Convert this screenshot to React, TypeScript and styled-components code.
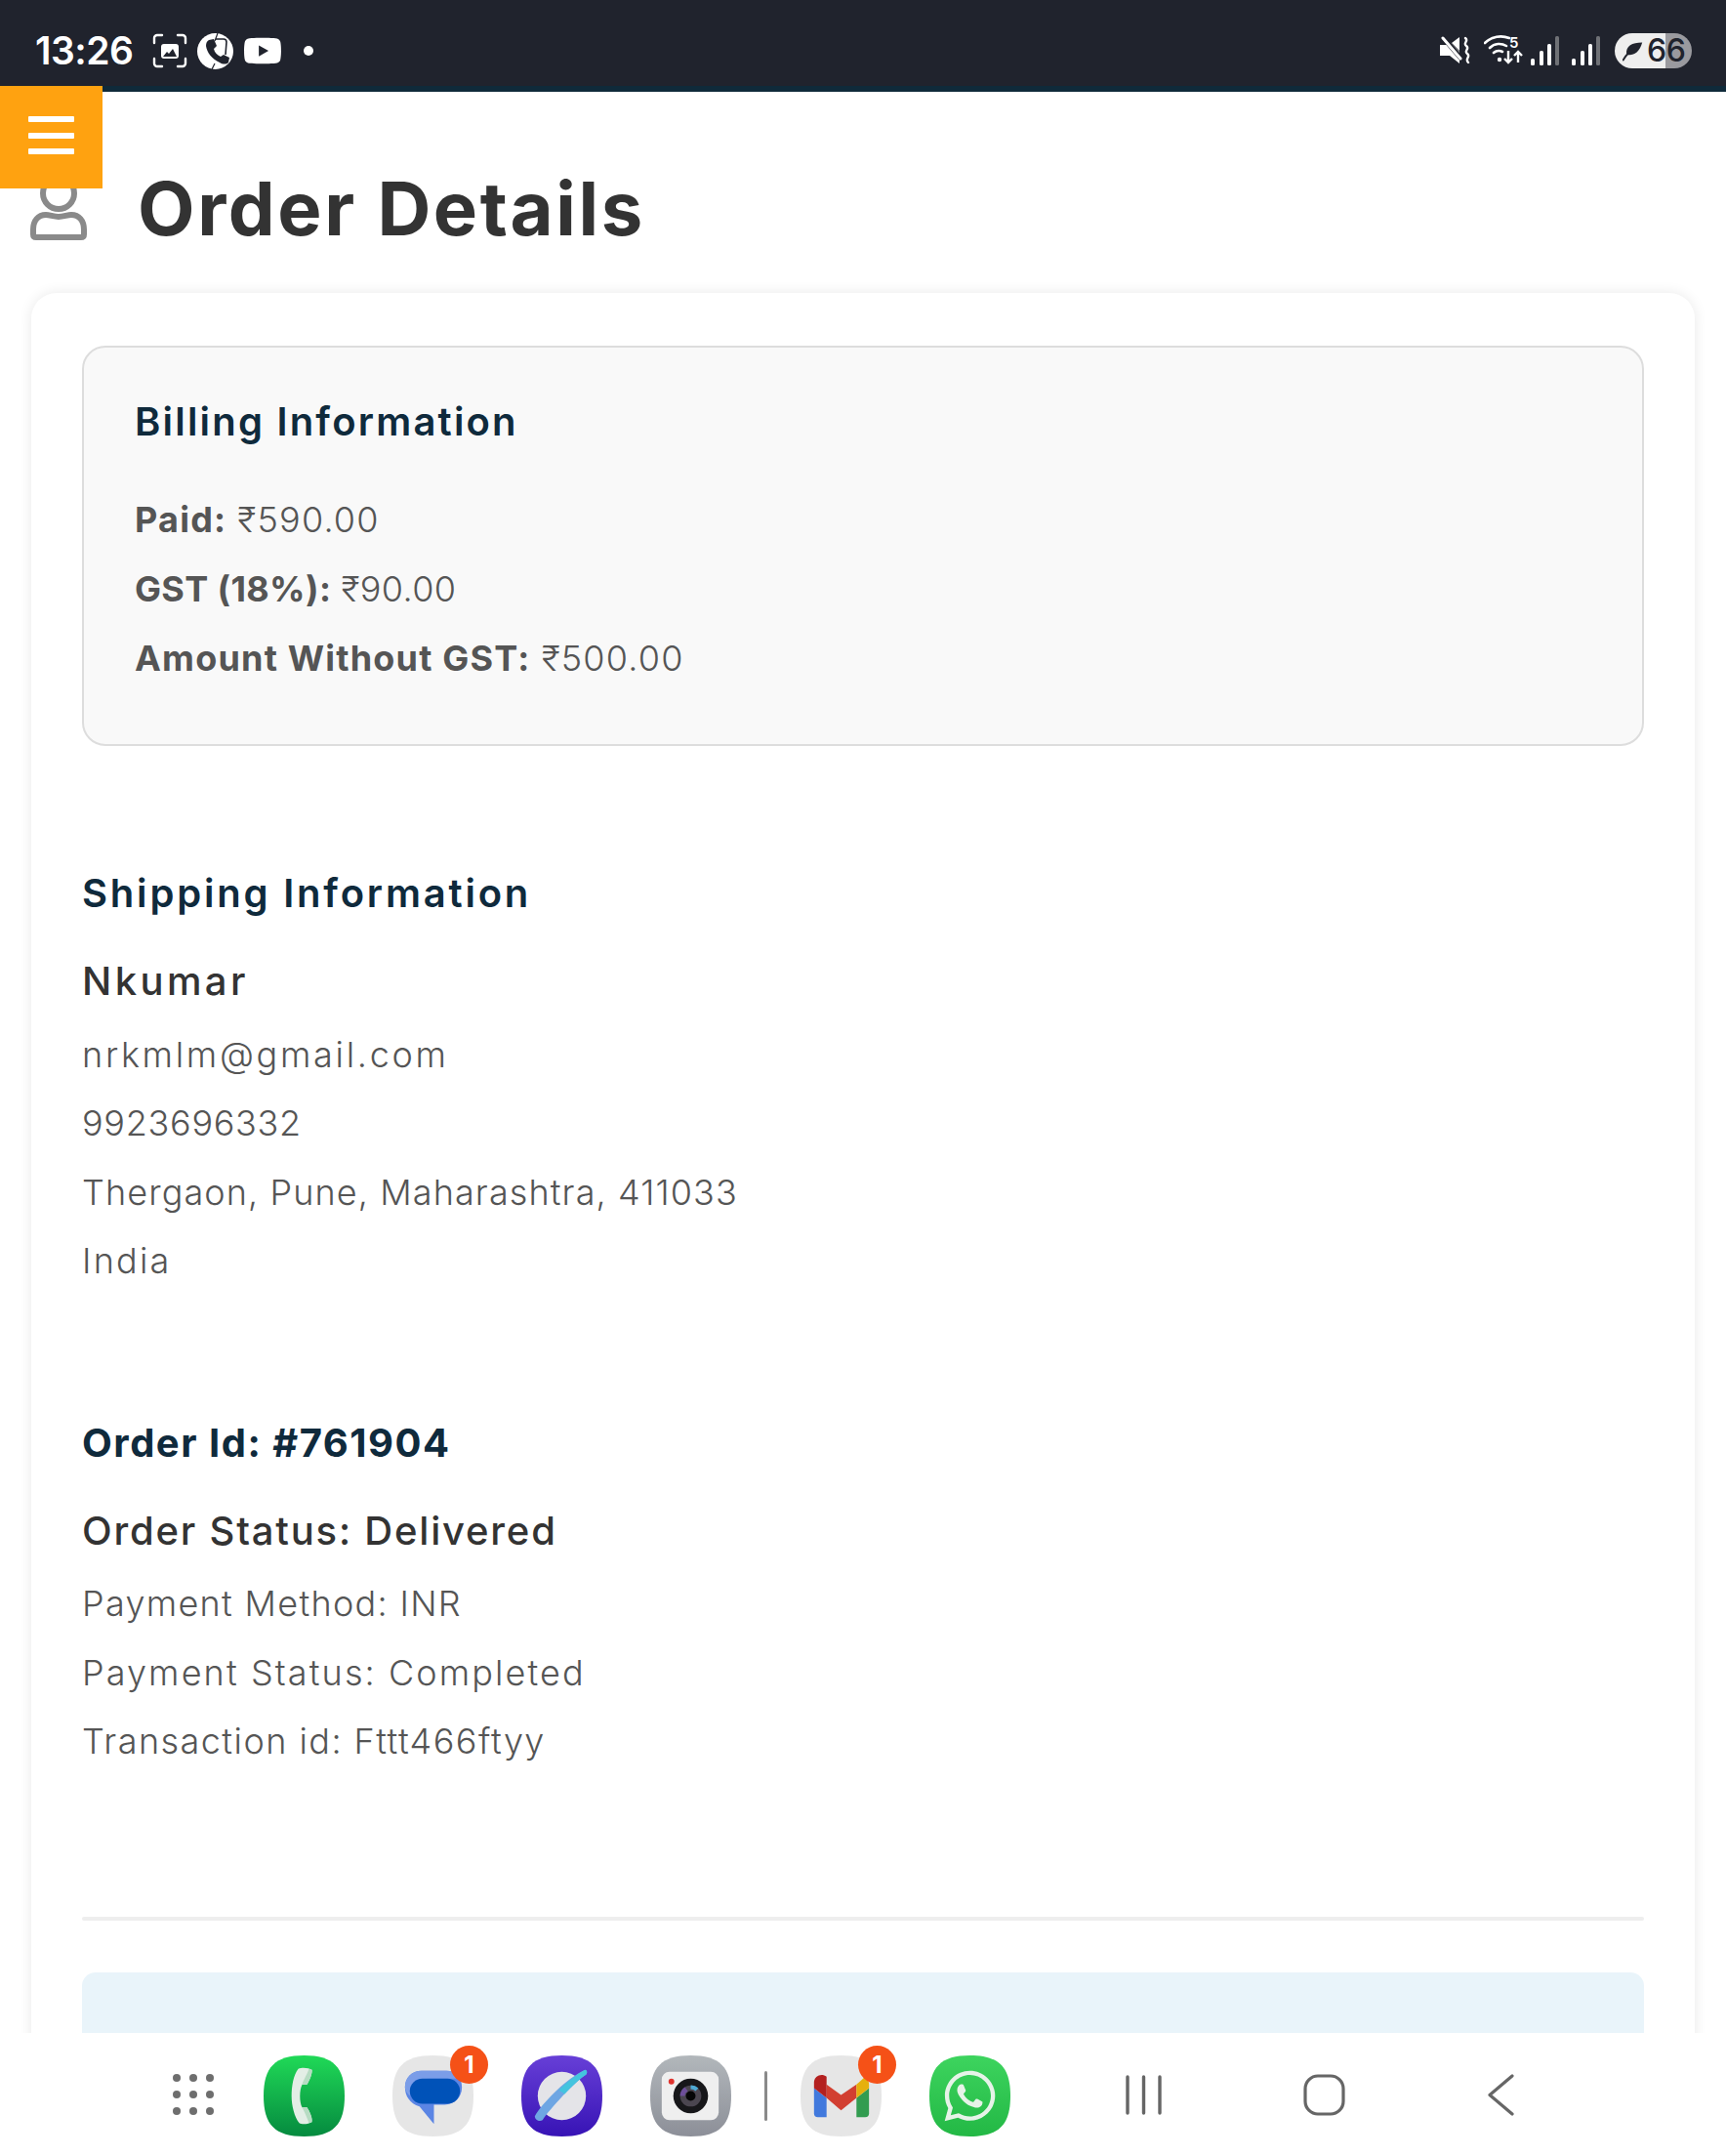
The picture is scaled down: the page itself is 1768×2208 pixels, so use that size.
import React from 'react';
import styled, { createGlobalStyle } from 'styled-components';
import { FaWhatsapp, FaYoutube } from 'react-icons/fa';

const GlobalStyle = createGlobalStyle`
  html, body {
    margin: 0;
    padding: 0;
    background: #fff;
    font-family: Inter, "Noto Sans", sans-serif;
  }
  * { box-sizing: border-box; }
`;

const SQUIRCLE = 'M42 0C72 0 84 12 84 42C84 72 72 84 42 84C12 84 0 72 0 42C0 12 12 0 42 0Z';

function ScreenshotIcon() {
  return (
    <svg width="36" height="36" viewBox="0 0 36 36" fill="none">
      <path d="M2 10V5a3 3 0 0 1 3-3h5M26 2h5a3 3 0 0 1 3 3v5M34 26v5a3 3 0 0 1-3 3h-5M10 34H5a3 3 0 0 1-3-3v-5" stroke="#fff" strokeWidth="2.4" strokeLinecap="round" />
      <rect x="9" y="11" width="18" height="15" rx="3" fill="#fff" />
      <path d="M11 24l4-5 2 2 4-5 4 8z" fill="#20232d" />
    </svg>
  );
}

function CallIcon() {
  return (
    <svg width="37" height="37" viewBox="0 0 37 37">
      <circle cx="18.5" cy="18.5" r="18.5" fill="#fff" />
      <path d="M12 7l5-1 3 7-3 3c1 4 3 6 7 8l3-2 6 3-1 5c-2 2-6 2-9 0C15 26 10 20 9 13c0-3 1-5 3-6z" fill="#20232d" />
      <path d="M19 6h8c2 0 3 1 3 3l-1 13" stroke="#20232d" strokeWidth="1.6" fill="none" />
      <path d="M21 0l-3 8M15 37l3-6" stroke="#20232d" strokeWidth="1.2" />
    </svg>
  );
}

function MuteIcon() {
  return (
    <svg width="31" height="30" viewBox="0 0 31 30">
      <path d="M0 10h6l4-3 10 10v12L10 21H0z" fill="#fff" transform="translate(0 -1)" />
      <path d="M3 1l18 21" stroke="#20232d" strokeWidth="5" strokeLinecap="round" />
      <path d="M3 2l18 21" stroke="#fff" strokeWidth="3" strokeLinecap="round" />
      <path d="M12 7l8-6v14z" fill="#fff" />
      <path d="M26 2c4 3-3 5 1 8 4 3-3 5 1 8 4 3-3 5 1 9" stroke="#fff" strokeWidth="2.4" fill="none" strokeLinecap="round" />
    </svg>
  );
}

function WifiIcon() {
  return (
    <svg width="42" height="40" viewBox="0 -4 42 40" fill="none">
      <path d="M1 8C8 1 18 0 26 3M6 13c5-5 12-5 17-2M10 18c3-2.5 6-2.5 9-1" stroke="#fff" strokeWidth="2.6" strokeLinecap="round" />
      <circle cx="16" cy="25" r="2.2" fill="#fff" />
      <WifiBand x="26" y="13">5</WifiBand>
      <path d="M25 16v12M21 24l4 4 4-4M35 28V17M31 21l4-4 4 4" stroke="#fff" strokeWidth="2.4" />
    </svg>
  );
}

function SignalIcon() {
  return (
    <svg width="29" height="31" viewBox="0 0 29 31">
      <rect x="0" y="23" width="4" height="7" rx="1.5" fill="#fff" />
      <rect x="9" y="15" width="4" height="15" rx="1.5" fill="#fff" />
      <rect x="17" y="8" width="4" height="22" rx="1.5" fill="#fff" />
      <rect x="25" y="0" width="4" height="30" rx="1.5" fill="#6f7176" />
    </svg>
  );
}

function LeafIcon() {
  return (
    <svg width="21" height="21" viewBox="0 0 26 24">
      <path d="M25 1C12 1 4 5 5 16c6 2 16 0 20-15z" fill="#20232d" />
      <path d="M1 23C5 16 10 11 17 7" stroke="#20232d" strokeWidth="2.4" fill="none" strokeLinecap="round" />
    </svg>
  );
}

function UserIcon() {
  return (
    <svg width="58" height="66" viewBox="0 0 58 66" fill="none">
      <circle cx="29" cy="18" r="16" stroke="#8a8a8a" strokeWidth="6" />
      <path d="M3 55c0-9 5-15 13-15 4 0 8 2 13 2s9-2 13-2c8 0 13 6 13 15v5c0 2-1 3-3 3H6c-2 0-3-1-3-3z" stroke="#8a8a8a" strokeWidth="6" strokeLinejoin="round" />
    </svg>
  );
}

function PhoneApp() {
  return (
    <AppIcon>
      <svg width="83" height="83" viewBox="0 0 84 84">
        <defs>
          <linearGradient id="ph" x1="0" y1="0" x2="0" y2="1">
            <stop offset="0" stopColor="#20d957" />
            <stop offset="1" stopColor="#058a3f" />
          </linearGradient>
        </defs>
        <path d={SQUIRCLE} fill="url(#ph)" />
        <path d="M36 14C40 12 47 13 50 15C51 17 48 26 45 30C43 31 41 30 40 30C37 36 37 48 40 54C41 54 43 53 45 54C48 58 51 66 50 69C47 71 40 72 37 70C32 64 29 52 29 42C29 32 31 20 36 14Z" fill="#e3eee6" />
        <path d="M47 14C49 14 50 15 50 15C51 17 48 26 45 30C43 31 41 30 40 30C41 26 45 20 47 14ZM40 54C41 54 43 53 45 54C48 58 51 66 50 69L47 70C45 64 42 58 40 54Z" fill="#b7dcc3" />
      </svg>
    </AppIcon>
  );
}

function MessagesApp() {
  return (
    <AppIcon>
      <svg width="83" height="83" viewBox="0 0 84 84">
        <path d={SQUIRCLE} fill="#e6e6e6" />
        <path d="M30 16h26c10 0 16 7 16 17 0 11-8 18-18 18h-11v20L28 53c-10-3-15-11-15-20 0-10 7-17 17-17z" fill="#5b85e4" />
        <path d="M30 16h26c9 0 15 6 16 10-2-1-4-2-7-2H38c-11 0-19 7-20 18-3-3-5-6-5-9 0-10 7-17 17-17z" fill="#7b9de8" />
        <rect x="18" y="24" width="52" height="26" rx="13" fill="#0052b8" />
      </svg>
      <Badge>1</Badge>
    </AppIcon>
  );
}

function BrowserApp() {
  return (
    <AppIcon>
      <svg width="83" height="83" viewBox="0 0 84 84">
        <defs>
          <linearGradient id="br" x1="0" y1="0" x2="0" y2="1">
            <stop offset="0" stopColor="#673fd7" />
            <stop offset="1" stopColor="#3713b5" />
          </linearGradient>
        </defs>
        <path d={SQUIRCLE} fill="url(#br)" />
        <circle cx="42" cy="42" r="25" fill="#e4e4e8" />
        <path d="M14 63c8-14 34-40 52-48 2 0 3 3 1 5-10 6-38 36-45 47-3 2-8 0-8-4z" fill="#6ea6e3" />
        <path d="M39 36c8-8 18-16 27-21 2 0 3 3 1 5-5 3-14 11-22 20z" fill="#44c4de" />
      </svg>
    </AppIcon>
  );
}

function CameraApp() {
  return (
    <AppIcon>
      <svg width="83" height="83" viewBox="0 0 84 84">
        <defs>
          <linearGradient id="cm" x1="0" y1="0" x2="0" y2="1">
            <stop offset="0" stopColor="#b2b7bb" />
            <stop offset="1" stopColor="#8c8f98" />
          </linearGradient>
        </defs>
        <path d={SQUIRCLE} fill="url(#cm)" />
        <rect x="12" y="17" width="59" height="50" rx="8" fill="#efefef" />
        <circle cx="22" cy="27" r="3" fill="#e0332e" />
        <circle cx="42" cy="42" r="18" fill="#17171a" />
        <circle cx="42" cy="42" r="11" fill="#4b4650" />
        <path d="M42 31a11 11 0 0 1 8 3l-3 3a7 7 0 0 0-5-2z" fill="#4ea9d4" />
        <path d="M31 42a11 11 0 0 1 5-9l3 4a6 6 0 0 0-3 5z" fill="#6d4e9a" />
        <circle cx="42" cy="42" r="5" fill="#050506" />
      </svg>
    </AppIcon>
  );
}

function GmailApp() {
  return (
    <AppIcon>
      <svg width="83" height="83" viewBox="0 0 84 84">
        <path d={SQUIRCLE} fill="#e6e6e6" />
        <path d="M14 34l13 10v20H18a4 4 0 0 1-4-4z" fill="#4179dd" />
        <path d="M58 44l13-10v26a4 4 0 0 1-4 4h-9z" fill="#329c50" />
        <path d="M27 30l15 11 16-11v14L42 57 27 44z" fill="#d23f31" />
        <path d="M14 28c0-7 8-10 13-6v22L14 34z" fill="#b3201f" />
        <path d="M58 30l8-7c2 1 5 3 5 7v4L58 44z" fill="#e6b00d" />
      </svg>
      <Badge>1</Badge>
    </AppIcon>
  );
}

function WhatsappApp() {
  return (
    <AppIcon>
      <svg width="83" height="83" viewBox="0 0 84 84">
        <defs>
          <linearGradient id="wa" x1="0" y1="0" x2="0" y2="1">
            <stop offset="0" stopColor="#3dd45e" />
            <stop offset="1" stopColor="#23b845" />
          </linearGradient>
        </defs>
        <path d={SQUIRCLE} fill="url(#wa)" />
      </svg>
      <WhatsappGlyph>
        <FaWhatsapp size={59} color="#e6f3e8" />
      </WhatsappGlyph>
    </AppIcon>
  );
}

export default function App() {
  return (
    <Screen>
      <GlobalStyle />
      <StatusBar>
        <StatusLeft>
          <Time>13:26</Time>
          <NotificationIcons>
            <ScreenshotIcon />
            <CallIcon />
            <FaYoutube size={40} color="#fff" />
            <MoreDot />
          </NotificationIcons>
        </StatusLeft>
        <StatusRight>
          <MuteIcon />
          <WifiIcon />
          <SignalGroup>
            <SignalIcon />
            <SignalIcon />
          </SignalGroup>
          <Battery>
            <LeafIcon />
            <BatteryLevel>66</BatteryLevel>
          </Battery>
        </StatusRight>
      </StatusBar>
      <MenuButton aria-label="menu">
        <MenuLine />
        <MenuLine />
        <MenuLine />
      </MenuButton>
      <PageHeader>
        <UserIcon />
        <PageTitle>Order Details</PageTitle>
      </PageHeader>
      <Card>
        <BillingBox>
          <BillingTitle>Billing Information</BillingTitle>
          <BillingRow $track={1.2}><strong>Paid:</strong> ₹590.00</BillingRow>
          <BillingRow $track={0.35}><strong>GST (18%):</strong> ₹90.00</BillingRow>
          <BillingRow $track={1.2}><strong>Amount Without GST:</strong> ₹500.00</BillingRow>
        </BillingBox>
        <InfoSection>
          <SectionTitle $weight={600} $track={2.8}>Shipping Information</SectionTitle>
          <SubTitle $track={3.4}>Nkumar</SubTitle>
          <InfoLines>
            <InfoLine $track={2.7}>nrkmlm@gmail.com</InfoLine>
            <InfoLine $track={0.7}>9923696332</InfoLine>
            <InfoLine $track={1.1}>Thergaon, Pune, Maharashtra, 411033</InfoLine>
            <InfoLine $track={2.2}>India</InfoLine>
          </InfoLines>
        </InfoSection>
        <InfoSection>
          <SectionTitle $weight={700} $track={1.5}>Order Id: #761904</SectionTitle>
          <SubTitle $track={1.8}>Order Status: Delivered</SubTitle>
          <InfoLines>
            <InfoLine $track={1.3}>Payment Method: INR</InfoLine>
            <InfoLine $track={2.1}>Payment Status: Completed</InfoLine>
            <InfoLine $track={1.45}>Transaction id: Fttt466ftyy</InfoLine>
          </InfoLines>
        </InfoSection>
        <Divider />
        <NoticeBox />
      </Card>
      <Dock>
        <AppGrid>
          {Array.from({ length: 9 }).map((_, i) => <GridDot key={i} />)}
        </AppGrid>
        <DockApps>
          <PhoneApp />
          <MessagesApp />
          <BrowserApp />
          <CameraApp />
          <DockSeparator />
          <GmailApp />
          <WhatsappApp />
        </DockApps>
        <NavButtons>
          <svg width="37" height="41" viewBox="0 0 37 41">
            <path d="M2 2v37M18.5 2v37M35 2v37" stroke="#666" strokeWidth="3.4" strokeLinecap="round" />
          </svg>
          <svg width="45" height="43" viewBox="0 0 45 43" fill="none">
            <rect x="3" y="2" width="39" height="39" rx="13" stroke="#666" strokeWidth="3.2" />
          </svg>
          <svg width="28" height="43" viewBox="0 0 28 43" fill="none">
            <path d="M26 2L3 21.5 26 41" stroke="#666" strokeWidth="3.2" strokeLinecap="round" strokeLinejoin="round" />
          </svg>
        </NavButtons>
      </Dock>
    </Screen>
  );
}

const Screen = styled.div`
  position: relative;
  width: 1768px;
  height: 2208px;
  overflow: hidden;
  background: #fff;
`;

const StatusBar = styled.div`
  display: flex;
  align-items: center;
  justify-content: space-between;
  height: 94px;
  padding: 16px 35px 0 36px;
  background: #20232d;
  border-bottom: 6px solid #0f2a3a;
`;

const StatusLeft = styled.div`
  display: flex;
  align-items: center;
  gap: 20px;
`;

const Time = styled.span`
  color: #fff;
  font-size: 39px;
  font-weight: 600;
  line-height: 46px;
  letter-spacing: -0.5px;
`;

const NotificationIcons = styled.div`
  display: flex;
  align-items: center;
  gap: 10px;
`;

const MoreDot = styled.span`
  width: 10px;
  height: 10px;
  margin-left: 12px;
  border-radius: 50%;
  background: #fff;
`;

const StatusRight = styled.div`
  display: flex;
  align-items: center;
  gap: 14px;
`;

const WifiBand = styled.text`
  fill: #fff;
  font-family: Inter, sans-serif;
  font-size: 15px;
  font-weight: 600;
`;

const SignalGroup = styled.div`
  display: flex;
  gap: 13px;
  margin-left: -8px;
`;

const Battery = styled.div`
  display: flex;
  align-items: center;
  gap: 4px;
  width: 79px;
  height: 36px;
  margin-left: 1px;
  padding-left: 8px;
  border-radius: 18px;
  background: linear-gradient(90deg, #eeeeee 0 52px, #9a9a9f 52px);
`;

const BatteryLevel = styled.span`
  color: #20232d;
  font-size: 32px;
  font-weight: 500;
  line-height: 36px;
  letter-spacing: -0.5px;
  white-space: nowrap;
`;

const MenuButton = styled.button`
  position: absolute;
  top: 88px;
  left: 0;
  z-index: 2;
  display: flex;
  flex-direction: column;
  align-items: center;
  justify-content: center;
  gap: 10.5px;
  width: 105px;
  height: 105px;
  padding: 0 0 4px;
  border: 0;
  background: #ffa210;
`;

const MenuLine = styled.span`
  width: 47px;
  height: 6px;
  border-radius: 1px;
  background: #fff;
`;

const PageHeader = styled.div`
  display: flex;
  align-items: center;
  gap: 52px;
  height: 206px;
  padding: 86px 0 54px 31px;
`;

const PageTitle = styled.h1`
  margin: 0;
  color: #333;
  font-size: 76px;
  font-weight: 700;
  line-height: 76px;
  letter-spacing: 2.6px;
`;

const Card = styled.div`
  margin: 0 32px;
  height: 1900px;
  padding: 54px 52px;
  border-radius: 26px;
  background: #fff;
  box-shadow: 0 0 14px rgba(0, 0, 0, 0.09);
`;

const BillingBox = styled.div`
  height: 410px;
  padding: 51px 52px;
  border: 2px solid #ddd;
  border-radius: 24px;
  background: #f9f9f9;
`;

const BillingTitle = styled.h3`
  margin: 0 0 40px;
  color: #0f2a3c;
  font-size: 40px;
  font-weight: 600;
  line-height: 50px;
  letter-spacing: 2.2px;
`;

const BillingRow = styled.div<{ $track: number }>`
  color: #555;
  font-size: 36px;
  font-weight: 300;
  line-height: 71px;
  letter-spacing: ${(p) => p.$track}px;

  strong {
    font-weight: 700;
  }
`;

const InfoSection = styled.section`
  margin-top: 126px;
`;

const SectionTitle = styled.h3<{ $weight: number; $track: number }>`
  margin: 0 0 40px;
  color: #0f2a3c;
  font-size: 40px;
  font-weight: ${(p) => p.$weight};
  line-height: 50px;
  letter-spacing: ${(p) => p.$track}px;
`;

const SubTitle = styled.h4<{ $track: number }>`
  margin: 0;
  color: #333;
  font-size: 40px;
  font-weight: 500;
  line-height: 50px;
  letter-spacing: ${(p) => p.$track}px;
`;

const InfoLines = styled.div`
  margin-top: 14.5px;
`;

const InfoLine = styled.div<{ $track: number }>`
  color: #555;
  font-size: 36px;
  font-weight: 300;
  line-height: 70.5px;
  letter-spacing: ${(p) => p.$track}px;
`;

const Divider = styled.div`
  height: 4px;
  margin-top: 144px;
  border-radius: 2px;
  background: #eee;
`;

const NoticeBox = styled.div`
  height: 200px;
  margin-top: 53px;
  border-radius: 14px;
  background: #e9f4fa;
`;

const Dock = styled.div`
  position: absolute;
  left: 0;
  right: 0;
  bottom: 0;
  z-index: 3;
  display: flex;
  align-items: center;
  height: 126px;
  padding-left: 177px;
  background: #fff;
`;

const AppGrid = styled.div`
  display: grid;
  grid-template-columns: repeat(3, 8px);
  gap: 9px;
`;

const GridDot = styled.span`
  width: 8px;
  height: 8px;
  border-radius: 50%;
  background: #6e6e6e;
`;

const DockApps = styled.div`
  display: flex;
  align-items: center;
  gap: 49px;
  margin: 3px 0 0 51px;
`;

const AppIcon = styled.div`
  position: relative;
  width: 83px;
  height: 83px;

  svg {
    display: block;
  }
`;

const WhatsappGlyph = styled.div`
  position: absolute;
  top: 12px;
  left: 12px;
`;

const Badge = styled.span`
  position: absolute;
  top: -10px;
  right: -15px;
  display: flex;
  align-items: center;
  justify-content: center;
  width: 39px;
  height: 39px;
  border-radius: 50%;
  background: #f55117;
  color: #fff;
  font-size: 24px;
  font-weight: 700;
`;

const DockSeparator = styled.span`
  width: 3px;
  height: 51px;
  margin: 0 -15px;
  border-radius: 2px;
  background: #8a8a8a;
`;

const NavButtons = styled.div`
  display: flex;
  align-items: center;
  gap: 144px;
  margin-left: 118px;

  svg {
    display: block;
  }
`;
